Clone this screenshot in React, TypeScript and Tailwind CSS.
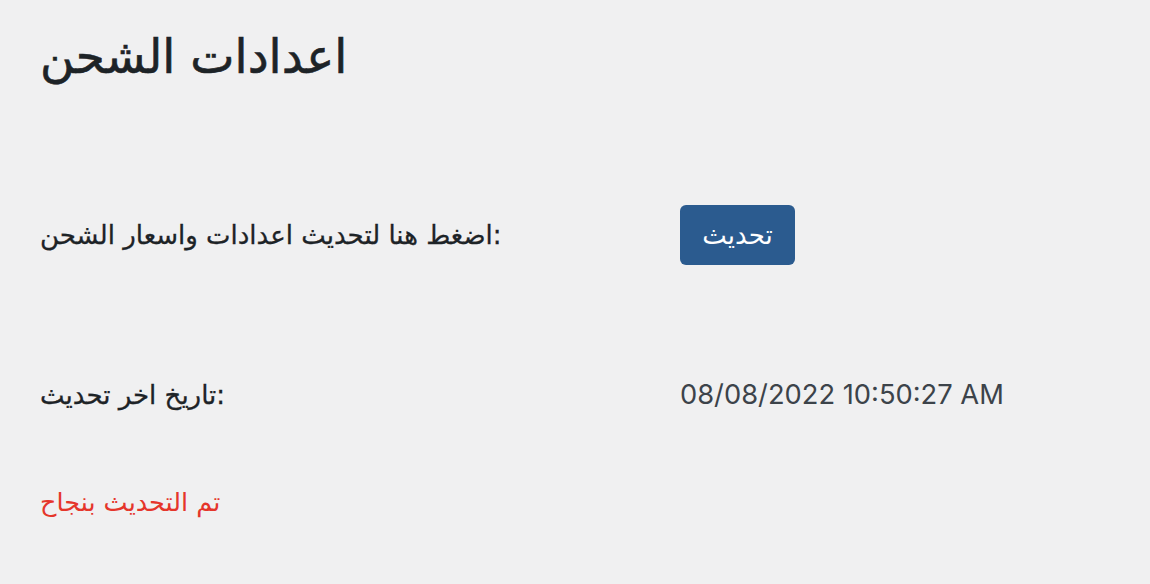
export default function App() {
  const arabic = { fontFamily: '"DejaVu Sans", "Noto Sans", sans-serif' }

  return (
    <div className="min-h-screen bg-[#f0f0f1] px-10 pt-[27px] text-[#1d2327]" style={arabic}>
      <h1 className="text-[47px] leading-[60px] font-normal [-webkit-text-stroke:0.6px_#1d2327]">اعدادات الشحن</h1>

      <div className="mt-[118px] grid grid-cols-[640px_1fr] items-center h-[60px]">
        <div className="text-[26px] leading-[40px] [-webkit-text-stroke:0.3px_#1d2327]">
          اضغط هنا لتحديث اعدادات واسعار الشحن:
        </div>
        <div>
          <button className="h-[60px] w-[115px] rounded-[6px] bg-[#2b5b8f] text-white text-[26px] leading-none">
            تحديث
          </button>
        </div>
      </div>

      <div className="mt-[110px] grid grid-cols-[640px_1fr] items-center h-[40px]">
        <div className="text-[26px] leading-[40px] [-webkit-text-stroke:0.3px_#1d2327]">تاريخ اخر تحديث:</div>
        <div
          className="text-[27.3px] leading-[40px] text-[#3c434a]"
          style={{ fontFamily: 'Inter, "Liberation Sans", sans-serif' }}
        >
          08/08/2022 10:50:27 AM
        </div>
      </div>

      <p className="mt-[67px] text-[25.5px] leading-[40px] text-[#e5352b]">تم التحديث بنجاح</p>
    </div>
  )
}
